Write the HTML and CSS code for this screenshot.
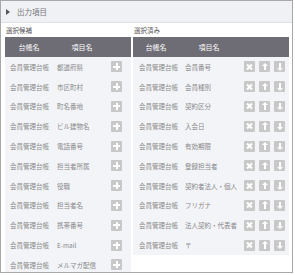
FILE: index.html
```html
<!DOCTYPE html>
<html lang="ja">
<head>
  <meta charset="UTF-8">
  <title>出力項目</title>
  <link rel="stylesheet" href="styles.css">
</head>
<body>
  <div class="panel">
    <div class="panel-head"><span class="caret"></span>出力項目</div>
    <div class="panel-body">
      <div class="col col-left">
        <div class="col-label">選択候補</div>
        <div class="list">
          <div class="list-head"><span>台帳名</span><span>項目名</span><span></span></div>
          <div class="row"><span>会員管理台帳</span><span>都道府県</span><span class="acts"><i class="btn plus"></i></span></div>
          <div class="row"><span>会員管理台帳</span><span>市区町村</span><span class="acts"><i class="btn plus"></i></span></div>
          <div class="row"><span>会員管理台帳</span><span>町名番地</span><span class="acts"><i class="btn plus"></i></span></div>
          <div class="row"><span>会員管理台帳</span><span>ビル建物名</span><span class="acts"><i class="btn plus"></i></span></div>
          <div class="row"><span>会員管理台帳</span><span>電話番号</span><span class="acts"><i class="btn plus"></i></span></div>
          <div class="row"><span>会員管理台帳</span><span>担当者所属</span><span class="acts"><i class="btn plus"></i></span></div>
          <div class="row"><span>会員管理台帳</span><span>役職</span><span class="acts"><i class="btn plus"></i></span></div>
          <div class="row"><span>会員管理台帳</span><span>担当者名</span><span class="acts"><i class="btn plus"></i></span></div>
          <div class="row"><span>会員管理台帳</span><span>携帯番号</span><span class="acts"><i class="btn plus"></i></span></div>
          <div class="row"><span>会員管理台帳</span><span>E-mail</span><span class="acts"><i class="btn plus"></i></span></div>
          <div class="row"><span>会員管理台帳</span><span>メルマガ配信</span><span class="acts"><i class="btn plus"></i></span></div>
        </div>
      </div>

      <div class="col col-right">
        <div class="col-label">選択済み</div>
        <div class="list">
          <div class="list-head"><span>台帳名</span><span>項目名</span><span></span></div>
          <div class="row"><span>会員管理台帳</span><span>会員番号</span><span class="acts"><i class="btn del"></i><i class="btn up"></i><i class="btn down"></i></span></div>
          <div class="row"><span>会員管理台帳</span><span>会員種別</span><span class="acts"><i class="btn del"></i><i class="btn up"></i><i class="btn down"></i></span></div>
          <div class="row"><span>会員管理台帳</span><span>契約区分</span><span class="acts"><i class="btn del"></i><i class="btn up"></i><i class="btn down"></i></span></div>
          <div class="row"><span>会員管理台帳</span><span>入会日</span><span class="acts"><i class="btn del"></i><i class="btn up"></i><i class="btn down"></i></span></div>
          <div class="row"><span>会員管理台帳</span><span>有効期限</span><span class="acts"><i class="btn del"></i><i class="btn up"></i><i class="btn down"></i></span></div>
          <div class="row"><span>会員管理台帳</span><span>登録担当者</span><span class="acts"><i class="btn del"></i><i class="btn up"></i><i class="btn down"></i></span></div>
          <div class="row"><span>会員管理台帳</span><span>契約者法人・個人</span><span class="acts"><i class="btn del"></i><i class="btn up"></i><i class="btn down"></i></span></div>
          <div class="row"><span>会員管理台帳</span><span>フリガナ</span><span class="acts"><i class="btn del"></i><i class="btn up"></i><i class="btn down"></i></span></div>
          <div class="row"><span>会員管理台帳</span><span>法人契約・代表者</span><span class="acts"><i class="btn del"></i><i class="btn up"></i><i class="btn down"></i></span></div>
          <div class="row"><span>会員管理台帳</span><span>〒</span><span class="acts"><i class="btn del"></i><i class="btn up"></i><i class="btn down"></i></span></div>
        </div>
      </div>
    </div>
  </div>
</body>
</html>
```

FILE: styles.css
```css
body {
  margin: 0;
  font-family: "Noto Sans CJK JP", "Noto Sans", sans-serif;
  color: #888;
}
.panel {
  width: 291px;
  height: 271px;
  border: 1px solid #a8a8a8;
  overflow: hidden;
  background: #fff;
}
.panel-head {
  height: 21px;
  background: #eff1f5;
  border-bottom: 1px solid #dde0e6;
  display: flex;
  align-items: center;
  padding-left: 5px;
  font-size: 7.5px;
  color: #777;
}
.caret {
  width: 0;
  height: 0;
  border-top: 3px solid transparent;
  border-bottom: 3px solid transparent;
  border-left: 4px solid #555;
  margin-right: 7px;
}
.panel-body {
  display: flex;
  gap: 2px;
  padding: 0 3px 0 4px;
}
.col-left {
  width: 126px;
}
.col-right {
  width: 156px;
}
.col-label {
  height: 14px;
  font-size: 6.5px;
  line-height: 15px;
  color: #555;
  padding-left: 1px;
}
.list {
  background: #f3f4f8;
}
.col-left .list {
  height: 300px;
}
.list-head,
.row {
  display: grid;
  align-items: center;
}
.col-left .list-head,
.col-left .row {
  grid-template-columns: 48px 58px 20px;
}
.col-right .list-head,
.col-right .row {
  grid-template-columns: 46px 60px 50px;
}
.list-head {
  height: 20px;
  background: #6e6d75;
  color: #fff;
  font-size: 7px;
  text-align: center;
}
.row {
  height: 19.8px;
  font-size: 6.5px;
  white-space: nowrap;
}
.row span:first-child {
  padding-left: 5px;
}
.row span:nth-child(2) {
  padding-left: 4px;
}
.col-right .row span:first-child {
  padding-left: 6px;
}
.col-right .row span:nth-child(2) {
  padding-left: 6px;
}
.acts {
  display: flex;
  gap: 4px;
  padding-left: 5px;
}
.btn {
  display: block;
  width: 11px;
  height: 11px;
  background-color: #c8c8c8;
  border-radius: 1px;
  background-repeat: no-repeat;
  background-position: center;
}
.col-left .acts {
  padding-left: 0;
}
.plus {
  background-image:
    linear-gradient(#fff, #fff),
    linear-gradient(#fff, #fff);
  background-size: 7px 2px, 2px 7px;
}
.del {
  position: relative;
}
.del::before,
.del::after {
  content: "";
  position: absolute;
  left: 2px;
  top: 4.5px;
  width: 7px;
  height: 2px;
  background: #fff;
  transform: rotate(45deg);
}
.del::after {
  transform: rotate(-45deg);
}
.up,
.down {
  position: relative;
}
.up::before,
.down::before {
  content: "";
  position: absolute;
  left: 4.5px;
  top: 4px;
  width: 2px;
  height: 5px;
  background: #fff;
}
.down::before {
  top: 2px;
}
.up::after,
.down::after {
  content: "";
  position: absolute;
  left: 2.5px;
  width: 0;
  height: 0;
  border-left: 3px solid transparent;
  border-right: 3px solid transparent;
}
.up::after {
  top: 1.5px;
  border-bottom: 3px solid #fff;
}
.down::after {
  top: 6.5px;
  border-top: 3px solid #fff;
}
```
